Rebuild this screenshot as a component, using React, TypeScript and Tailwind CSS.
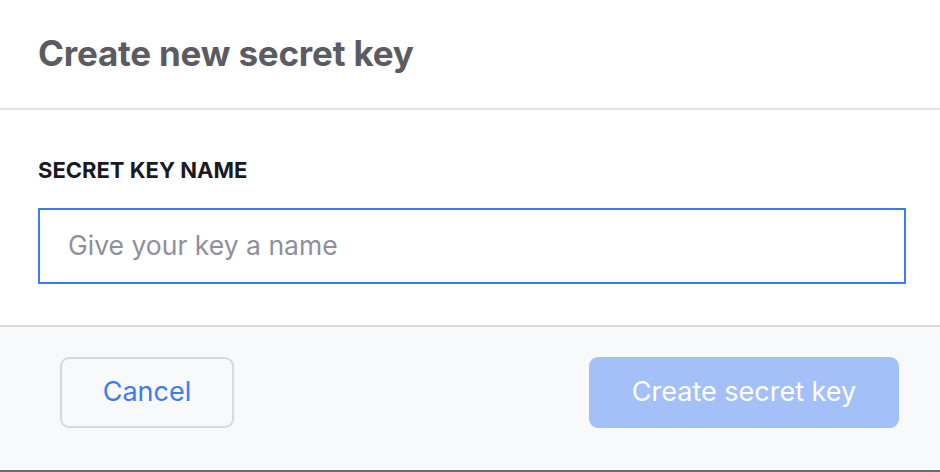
import React from "react";

export default function App() {
  return (
    <div className="w-[940px] h-[472px] bg-white flex flex-col overflow-hidden" style={{ fontFamily: "Inter, 'Noto Sans', sans-serif" }}>
      <div className="h-[110px] shrink-0 border-b-2 border-[#e3e3e5] flex items-center pl-[38px] pb-[2px]">
        <h1 className="text-[35px] font-bold text-[#5b5b62] tracking-[-0.2px]">Create new secret key</h1>
      </div>
      <div className="h-[217px] shrink-0 border-b-2 border-[#d9d9dc] px-[38px] pt-[46px] flex flex-col">
        <label className="text-[22px] font-bold text-[#1b1b1f] tracking-[0px] leading-[28px] uppercase">Secret key name</label>
        <div className="mt-[24px] w-[868px] h-[76px] border-2 border-[#3d7bf2] flex items-center pl-[28px]">
          <input
            className="w-full outline-none bg-transparent text-[26.5px] text-[#1b1b1f] placeholder:text-[#8f8f9a]"
            placeholder="Give your key a name"
          />
        </div>
      </div>
      <div className="flex-1 bg-[#f8f9fb] border-b-2 border-[#6b6b6b] flex items-start justify-between pt-[30px] pl-[60px] pr-[41px]">
        <button className="w-[174px] h-[71px] rounded-[9px] border-2 border-[#d9d9dc] bg-[#f8f9fb] text-[27px] text-[#3d7bf2]">
          Cancel
        </button>
        <button className="w-[310px] h-[71px] rounded-[9px] bg-[#a3c0f8] text-[27px] text-white">
          Create secret key
        </button>
      </div>
    </div>
  );
}
